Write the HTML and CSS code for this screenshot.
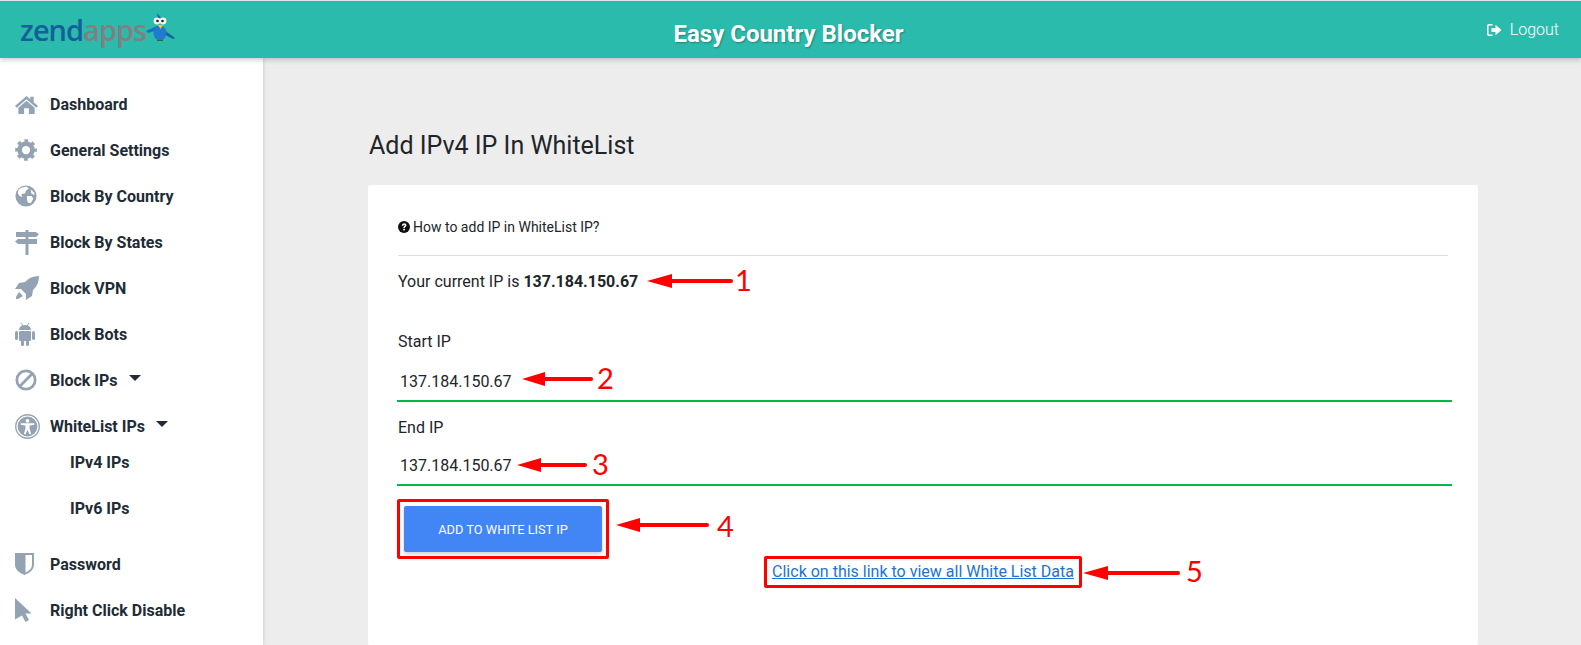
FILE: index.html
```html
<!DOCTYPE html>
<html>
<head>
    <title>Easy Country Blocker</title>
    <meta charset="utf-8">
    <link rel="stylesheet" href="styles.css">
</head>
<body>
    <header class="topbar">
        <div class="logo">
            <span class="logo-zend">zend</span><span class="logo-apps">apps</span>
            <svg class="bird" width="30" height="30" viewBox="0 0 30 30">
                <path d="M0 18 L11 13 L12 17 L2 20Z" fill="#1a6fc0"/>
                <path d="M18 17 L29 25 L27 26 L16 20Z" fill="#15609f"/>
                <ellipse cx="14" cy="20" rx="6.500" ry="7.500" fill="#1f7ad0"/>
                <path d="M11 0 L15 5 L12 6Z" fill="#15609f"/>
                <circle cx="11" cy="8" r="3.400" fill="#f4f4f4"/>
                <circle cx="17" cy="8" r="3.400" fill="#f4f4f4"/>
                <circle cx="11.500" cy="8" r="1.300" fill="#222"/>
                <circle cx="16.500" cy="8" r="1.300" fill="#222"/>
                <path d="M12 12 H17 L14.500 16Z" fill="#f3c81e"/>
                <path d="M11 27 H17 V28 H11Z" fill="#3b6b2a"/>
            </svg>
        </div>
        <div class="app-title">Easy Country Blocker</div>
        <a class="logout" href="#">
            <svg width="15" height="14" viewBox="0 0 15 14" fill="#fff">
                <path d="M0 3 Q0 1 2 1 H5.500 V2.500 H2.500 Q1.500 2.500 1.500 3.500 V10.500 Q1.500 11.500 2.500 11.500 H5.500 V13 H2 Q0 13 0 11Z"/>
                <path d="M4.500 5 H8.500 V1.800 L14.500 7 L8.500 12.200 V9 H4.500Z"/>
            </svg>
            Logout
        </a>
    </header>

    <div class="layout">
        <nav class="sidebar">
            <a class="nav-item" href="#">
                <span class="nav-icon">
                    <svg width="23" height="23" viewBox="0 0 24 24"><path d="M12 3 L0 13.500 L1.800 15.500 L12 6.600 L22.200 15.500 L24 13.500 L19.500 9.600 V4 H16 V6.600Z"/><path d="M3.500 15.500 L12 8.200 L20.500 15.500 V22 H14.500 V16 H9.500 V22 H3.500Z"/></svg>
                </span>
                Dashboard
            </a>
            <a class="nav-item" href="#">
                <span class="nav-icon">
                    <svg width="22" height="22" viewBox="0 0 24 24"><circle class="ring" cx="12" cy="12" r="7" stroke-width="5"/><circle class="ring" cx="12" cy="12" r="10" stroke-width="3.600" stroke-dasharray="3.900 3.950" stroke-dashoffset="1.950"/></svg>
                </span>
                General Settings
            </a>
            <a class="nav-item" href="#">
                <span class="nav-icon">
                    <svg width="22" height="22" viewBox="0 0 24 24"><circle cx="12" cy="12" r="11.500"/><path class="cut" d="M4 5 Q8 1.500 13 2 L15 4 L12 6 L11 9 L7 10 L8 13 L5 12 L3 9Z"/><path class="cut" d="M13 12 L18 12 L20 15 L17 20 L14 19 L13 15Z"/><path class="cut" d="M17 4.500 L20.500 8 L21.500 11 L18 9.500Z"/></svg>
                </span>
                Block By Country
            </a>
            <a class="nav-item" href="#">
                <span class="nav-icon">
                    <svg width="24" height="25" viewBox="0 0 24 25"><path d="M10.500 0 H13.500 V2 H21 L24 4.500 L21 7 H1 V2 H10.500Z"/><path d="M3 9 H22 V14 H3 L0 11.500Z"/><path d="M10.500 14 H13.500 V25 H10.500Z"/><path d="M10.500 7 H13.500 V9 H10.500Z"/></svg>
                </span>
                Block By States
            </a>
            <a class="nav-item" href="#">
                <span class="nav-icon">
                    <svg width="24" height="24" viewBox="0 0 24 24"><path d="M24 0 Q15 0 10 6 L4 7 L0 13 L6 13 L11 18 L11 24 L17 20 L18 14 Q24 9 24 0Z"/><path d="M4 16 L8 20 L3 23 L1 23 L1 21Z"/></svg>
                </span>
                Block VPN
            </a>
            <a class="nav-item" href="#">
                <span class="nav-icon">
                    <svg width="20" height="23" viewBox="0 0 20 23"><path d="M4 7 Q4 2.500 10 2 Q16 2.500 16 7Z"/><path class="slash" d="M6 0 L8 3 M14 0 L12 3" stroke-width="1"/><rect x="4" y="8" width="12" height="10" rx="1"/><rect x="0" y="8" width="3" height="9" rx="1.500"/><rect x="17" y="8" width="3" height="9" rx="1.500"/><rect x="6" y="17" width="3" height="6" rx="1.500"/><rect x="11" y="17" width="3" height="6" rx="1.500"/></svg>
                </span>
                Block Bots
            </a>
            <a class="nav-item" href="#">
                <span class="nav-icon">
                    <svg width="22" height="22" viewBox="0 0 24 24"><circle class="ring" cx="12" cy="12" r="10" stroke-width="3"/><path class="slash" d="M5.500 18.500 L18.500 5.500" stroke-width="3"/></svg>
                </span>
                Block IPs <span class="caret"></span>
            </a>
            <a class="nav-item" href="#">
                <span class="nav-icon">
                    <svg width="25" height="25" viewBox="0 0 24 24"><circle class="ring" cx="12" cy="12" r="11.300" stroke-width="1.300"/><circle cx="12" cy="12" r="9.500"/><circle class="cut" cx="12" cy="6.500" r="1.800"/><path class="cut" d="M5.500 8.800 H18.500 V10.300 L14 11 V14 L15.500 19.500 H13.800 L12 15 L10.200 19.500 H8.500 L10 14 V11 L5.500 10.300Z"/></svg>
                </span>
                WhiteList IPs <span class="caret"></span>
            </a>
            <div class="sub-nav">
                <a class="nav-item sub-item" href="#">IPv4 IPs</a>
                <a class="nav-item sub-item" href="#">IPv6 IPs</a>
            </div>
            <a class="nav-item" href="#">
                <span class="nav-icon">
                    <svg width="19" height="22" viewBox="0 0 19 22"><path d="M0 0 H19 V12 Q19 18 9.500 22 Q0 18 0 12Z"/><path class="cut" d="M10.500 2 H17 V12 Q17 16.500 10.500 19.500Z"/></svg>
                </span>
                Password
            </a>
            <a class="nav-item" href="#">
                <span class="nav-icon">
                    <svg width="17" height="24" viewBox="0 0 17 24"><path d="M0 0 L16.500 15.500 H10.500 L14 22 L10.500 24 L7 17.500 L0 21.500Z"/></svg>
                </span>
                Right Click Disable
            </a>
        </nav>

        <main class="content">
            <h1 class="page-title">Add IPv4 IP In WhiteList</h1>
            <section class="card">
                <a class="help-link" href="#">
                    <svg width="12" height="12" viewBox="0 0 24 24"><circle cx="12" cy="12" r="12" fill="#111"/><path d="M7.500 9.500 Q7.500 4.500 12.300 4.500 Q17 4.500 17 8.500 Q17 11 14.500 12.200 Q13.800 12.600 13.800 14 H10.500 Q10.500 11.500 12.300 10.500 Q13.500 9.800 13.500 8.700 Q13.500 7.500 12.200 7.500 Q11 7.500 10.800 9.500Z" fill="#fff"/><rect x="10.500" y="15.500" width="3.300" height="3.300" fill="#fff"/></svg>
                    How to add IP in WhiteList IP?
                </a>
                <hr class="divider">
                <p class="current-ip">Your current IP is <strong>137.184.150.67</strong></p>

                <label class="field-label">Start IP</label>
                <input class="field-input" type="text" value="137.184.150.67">
                <label class="field-label">End IP</label>
                <input class="field-input field-input-last" type="text" value="137.184.150.67">

                <div class="marked marked-button">
                    <button class="add-button" type="button">Add to White List IP</button>
                </div>
                <div class="link-row">
                    <div class="marked marked-link">
                        <a class="data-link" href="#">Click on this link to view all White List Data</a>
                    </div>
                </div>
            </section>
        </main>
    </div>

    <!-- red markers drawn on top of the screenshot -->
    <svg class="notes" width="1581" height="645" viewBox="0 0 1581 645">
        <path class="arrow-head" d="M647 281 L672 274 V288Z"/>
        <path class="arrow-line" d="M670 281 H731"/>
        <path class="arrow-head" d="M522 379 L545 372 V386Z"/>
        <path class="arrow-line" d="M543 379 H591"/>
        <path class="arrow-head" d="M517 465 L541 458 V472Z"/>
        <path class="arrow-line" d="M539 465 H585"/>
        <path class="arrow-head" d="M616 525 L640 518 V532Z"/>
        <path class="arrow-line" d="M638 525 H707"/>
        <path class="arrow-head" d="M1083 573 L1108 566 V580Z"/>
        <path class="arrow-line" d="M1106 573 H1178"/>
        <text class="note-num" x="735" y="291">1</text>
        <text class="note-num" x="597" y="389">2</text>
        <text class="note-num" x="592" y="475">3</text>
        <text class="note-num" x="717" y="537">4</text>
        <text class="note-num" x="1186" y="582">5</text>
    </svg>
</body>
</html>
```

FILE: styles.css
```css
* {
    box-sizing: border-box;
}
html, body {
    height: 100%;
}
body {
    margin: 0;
    font-family: Roboto, "Liberation Sans", sans-serif;
    color: #212529;
    background: #ededed;
    overflow: hidden;
    position: relative;
}
a {
    text-decoration: none;
    color: inherit;
}

/* top bar */
.topbar {
    height: 58px;
    background: #2bbbad;
    border-top: 1px solid #d8e8e6;
    display: grid;
    grid-template-columns: 1fr auto 1fr;
    align-items: center;
    padding: 0 22px 0 20px;
    position: relative;
    z-index: 2;
    box-shadow: 0 2px 5px rgba(0,0,0,0.2);
}
.logo {
    display: flex;
    align-items: center;
    font-family: "Open Sans", sans-serif;
    font-size: 29px;
    font-weight: 600;
    letter-spacing: -1px;
    height: 40px;
}
.logo-zend {
    color: #14609a;
}
.logo-apps {
    color: #808080;
}
.bird {
    margin-top: -4px;
}
.app-title {
    color: #fff;
    font-size: 24px;
    font-weight: 700;
    padding-top: 8px;
    margin-right: 2px;
    text-shadow: 1px 1px 2px rgba(0,0,0,0.3);
}
.logout {
    justify-self: end;
    display: flex;
    align-items: center;
    gap: 8px;
    color: #fff;
    font-size: 16px;
    font-weight: 300;
}

/* sidebar */
.layout {
    display: flex;
    height: calc(100% - 58px);
}
.sidebar {
    width: 263px;
    flex-shrink: 0;
    background: #fff;
    padding-top: 23px;
    box-shadow: 1px 0 3px rgba(0,0,0,0.12);
}
.nav-item {
    display: flex;
    align-items: center;
    height: 46px;
    padding-left: 15px;
    font-size: 16px;
    font-weight: 700;
    color: #212b36;
}
.nav-icon {
    width: 35px;
    flex-shrink: 0;
    display: flex;
    align-items: center;
}
.nav-icon svg {
    fill: #94a3b3;
}
.nav-icon .ring,
.nav-icon .slash {
    fill: none;
    stroke: #94a3b3;
}
.nav-icon .cut {
    fill: #fff;
}
.caret {
    width: 0;
    height: 0;
    margin-left: 11px;
    margin-bottom: 4px;
    border-left: 6px solid transparent;
    border-right: 6px solid transparent;
    border-top: 6px solid #212b36;
}
.sub-nav {
    margin: -10px 0 10px;
}
.sub-item {
    padding-left: 70px;
}

/* main area */
.content {
    flex: 1;
    padding: 0 103px 0 105px;
    display: flex;
    flex-direction: column;
}
.page-title {
    margin: 72px 0 23px 1px;
    font-size: 25px;
    line-height: 32px;
    font-weight: 400;
}
.card {
    flex: 1;
    background: #fff;
    border-radius: 2px;
    padding: 33px 30px 0;
}
.help-link {
    display: flex;
    align-items: center;
    gap: 3px;
    height: 18px;
    font-size: 14px;
}
.divider {
    margin: 19px 0 0;
    border: 0;
    border-top: 1px solid #dedede;
}
.current-ip {
    margin: 16px 0 0;
    font-size: 16px;
    line-height: 20px;
}
.current-ip strong {
    font-weight: 700;
}
.field-label {
    display: block;
    margin-top: 39px;
    font-size: 16px;
    line-height: 22px;
}
.field-input + .field-label {
    margin-top: 15px;
}
.field-input {
    display: block;
    width: calc(100% + 5px);
    margin: 15px 0 0 -1px;
    height: 34px;
    padding: 0 0 6px 3px;
    border: 0;
    border-bottom: 2px solid #00b84a;
    outline: 0;
    background: transparent;
    font-family: inherit;
    font-size: 16px;
    color: #212529;
}
.field-input-last {
    margin-top: 14px;
    height: 33px;
}
.marked {
    border: 3px solid #f00;
    border-radius: 2px;
}
.marked-button {
    width: 212px;
    height: 60px;
    padding: 4px;
    margin: 13px 0 0 -1px;
}
.add-button {
    display: block;
    width: 198px;
    height: 46px;
    border: 0;
    border-radius: 2px;
    background: #4285f4;
    color: #fff;
    font-family: inherit;
    font-size: 12.800px;
    font-weight: 400;
    text-transform: uppercase;
    box-shadow: 0 2px 4px rgba(0,0,0,0.2);
}
.link-row {
    display: flex;
    justify-content: center;
    margin-top: -3px;
}
.marked-link {
    padding: 1px 5px;
    line-height: 24px;
}
.data-link {
    font-size: 16px;
    color: #1a73d9;
    text-decoration: underline;
}

/* annotations */
.notes {
    position: absolute;
    left: 0;
    top: 0;
    z-index: 3;
    pointer-events: none;
}
.arrow-head {
    fill: #f00;
}
.arrow-line {
    fill: none;
    stroke: #f00;
    stroke-width: 4;
    stroke-linecap: round;
}
.note-num {
    fill: #f00;
    font-family: Lato, sans-serif;
    font-size: 29px;
}
```
